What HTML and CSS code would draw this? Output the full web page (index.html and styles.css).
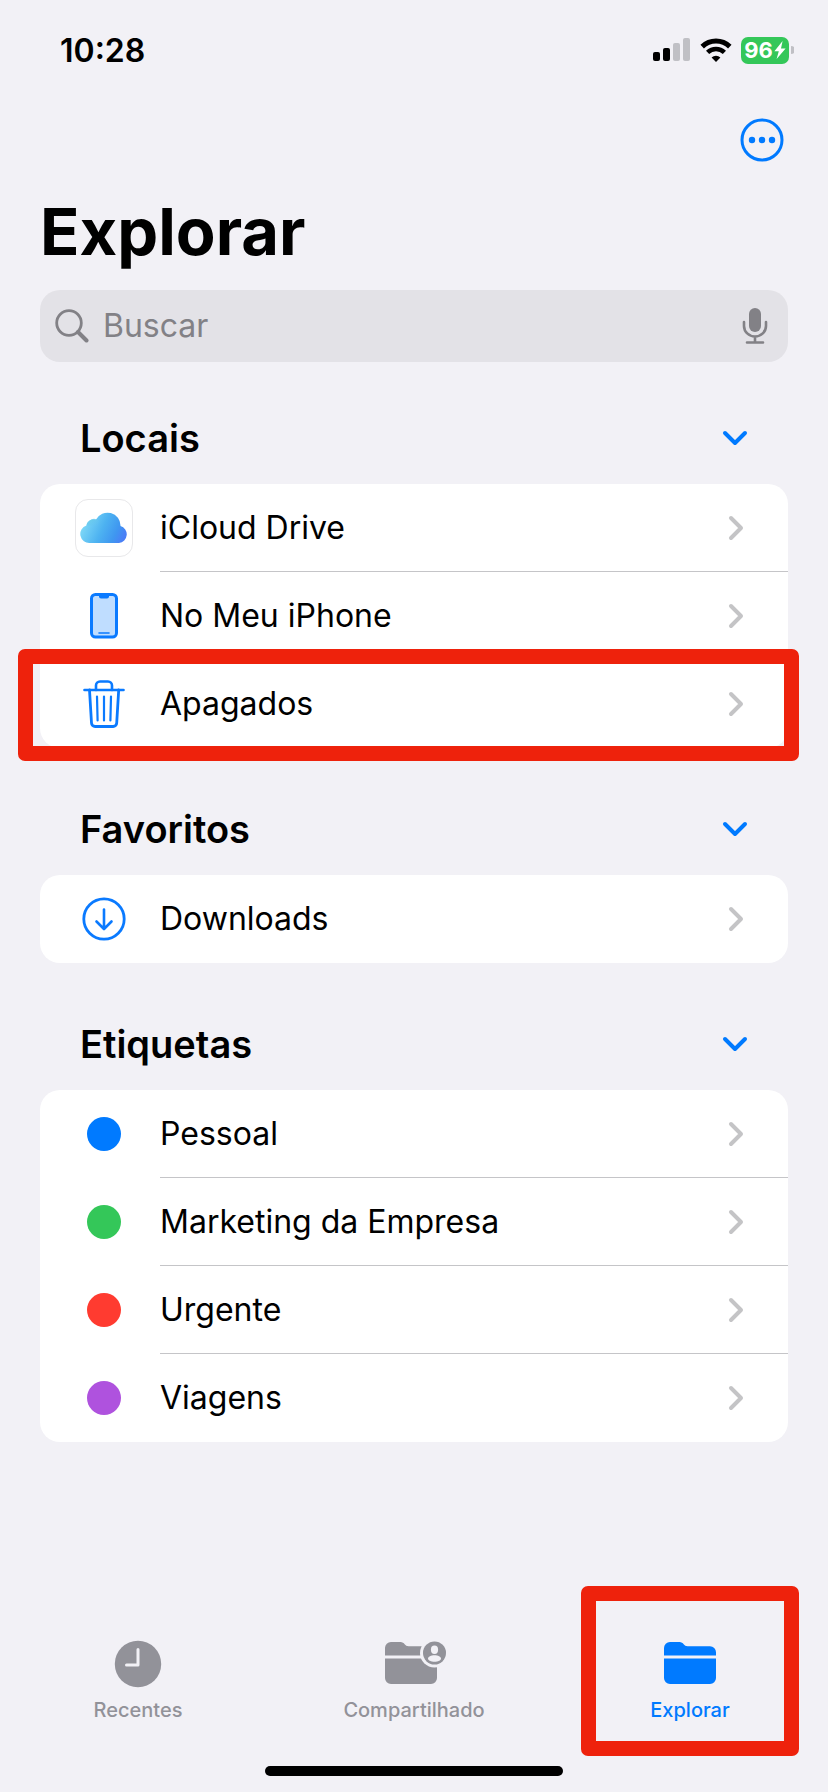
FILE: index.html
```html
<!DOCTYPE html>
<html lang="pt-BR">
<head>
<meta charset="utf-8">
<meta name="viewport" content="width=device-width, initial-scale=1">
<title>Explorar</title>
<link rel="stylesheet" href="styles.css">
</head>
<body>
<svg class="sprite" aria-hidden="true">
  <symbol id="down" viewBox="0 0 26 16"><path d="M3 3l10 10L23 3" fill="none" stroke="currentColor" stroke-width="4" stroke-linecap="round" stroke-linejoin="round"/></symbol>
  <symbol id="next" viewBox="0 0 16 26"><path d="M3 3l10 10L3 23" fill="none" stroke="currentColor" stroke-width="4" stroke-linecap="round" stroke-linejoin="round"/></symbol>
</svg>
<div class="screen">
  <header class="status">
    <time class="clock">10:28</time>
    <div class="indicators">
      <svg width="38" height="24" viewBox="0 0 38 24" aria-label="Sinal">
        <rect x="0" y="14" width="7" height="9" rx="2"/>
        <rect x="10" y="10" width="7" height="13" rx="2"/>
        <rect class="dim" x="20" y="5" width="7" height="18" rx="2"/>
        <rect class="dim" x="30" y="0" width="7" height="23" rx="2"/>
      </svg>
      <svg width="32" height="24" viewBox="0 0 32 24" aria-label="Wi-Fi">
        <path d="M2.2 8.6a20 20 0 0 1 27.6 0" fill="none" stroke="#000" stroke-width="5"/>
        <path d="M7.6 14.4a12.2 12.2 0 0 1 16.8 0" fill="none" stroke="#000" stroke-width="4.6"/>
        <path d="M16 24l-4.4-4.4a6.4 6.4 0 0 1 8.8 0z"/>
      </svg>
      <div class="battery">
        <span class="charge">96<svg width="12" height="18" viewBox="0 0 12 18" aria-hidden="true"><path d="M8.6 0L.4 10.2h4.4L2.6 18l9-10.6H7z" fill="#fff"/></svg></span>
        <svg width="3" height="8" viewBox="0 0 3 8" aria-hidden="true"><path class="dim" d="M0 0a4 4 0 0 1 0 8z"/></svg>
      </div>
    </div>
  </header>

  <main class="content">
    <div class="toolbar">
      <button class="more" type="button" aria-label="Mais">
        <svg width="44" height="44" viewBox="0 0 44 44"><circle cx="22" cy="22" r="20" fill="none" stroke="currentColor" stroke-width="3"/><g fill="currentColor"><circle cx="12" cy="22" r="3.2"/><circle cx="22" cy="22" r="3.2"/><circle cx="32" cy="22" r="3.2"/></g></svg>
      </button>
    </div>
    <h1 class="title">Explorar</h1>
    <label class="search">
      <svg width="34" height="34" viewBox="0 0 34 34" aria-hidden="true"><circle cx="14" cy="14" r="12.3" fill="none" stroke="currentColor" stroke-width="2.8"/><path d="M23 23l8.5 8.5" stroke="currentColor" stroke-width="4" stroke-linecap="round"/></svg>
      <input class="field" type="text" placeholder="Buscar" aria-label="Buscar">
      <svg width="26" height="38" viewBox="0 0 26 38" aria-hidden="true"><rect x="7" y="1" width="12" height="24" rx="6" fill="currentColor"/><path d="M2 15v4a11 10.5 0 0 0 22 0v-4M13 29.500v6M5 35.500h16" fill="none" stroke="currentColor" stroke-width="2.600" stroke-linecap="round"/></svg>
    </label>

    <section class="group">
      <div class="heading"><h2>Locais</h2><button class="fold" type="button" aria-label="Recolher Locais"><svg width="26" height="16"><use href="#down"/></svg></button></div>
      <ul class="card">
        <li><a class="row" href="#icloud">
          <span class="icon"><span class="tile"><svg width="48" height="32" viewBox="0 0 48 32">
            <defs>
              <linearGradient id="sky" x1="0" y1=".3" x2="1" y2=".6"><stop offset="0" stop-color="#86dff8"/><stop offset=".5" stop-color="#4db2f1"/><stop offset=".8" stop-color="#3f97f0"/><stop offset="1" stop-color="#4a7ff6"/></linearGradient>
              <linearGradient id="puff" x1="0" y1="0" x2="1" y2="1"><stop offset="0" stop-color="#6ccfe9"/><stop offset="1" stop-color="#63c0f2" stop-opacity="0"/></linearGradient>
            </defs>
            <path d="M10 31a9 9 0 0 1-3.600-17.500A7.500 7.500 0 0 1 16 7.600 13 13 0 0 1 40.500 14 8.700 8.700 0 0 1 39 31z" fill="url(#sky)"/>
            <path d="M6.400 13.500A7.500 7.500 0 0 1 19 9l-1 5z" fill="url(#puff)"/>
          </svg></span></span>
          <span class="name">iCloud Drive</span><svg class="next" width="16" height="26"><use href="#next"/></svg></a></li>
        <li><a class="row" href="#iphone">
          <span class="icon"><svg width="28" height="46" viewBox="0 0 28 46"><rect x="1.500" y="1.500" width="25" height="42.500" rx="4" fill="#bfddff" stroke="#0a7aff" stroke-width="3"/><path d="M9 2h10v1.500a2 2 0 0 1-2 2h-6a2 2 0 0 1-2-2z" fill="#0a7aff"/><path d="M9 40h10" stroke="#0a7aff" stroke-width="1.600" stroke-linecap="round"/></svg></span>
          <span class="name">No Meu iPhone</span><svg class="next" width="16" height="26"><use href="#next"/></svg></a></li>
        <li><a class="row marked" href="#apagados">
          <span class="icon"><svg width="42" height="48" viewBox="0 0 42 48" fill="none" stroke="#0a7aff" stroke-linecap="round" stroke-linejoin="round"><path d="M1.500 10h39" stroke-width="2.600"/><path d="M13 10V5.500a4 4 0 0 1 4-4h8a4 4 0 0 1 4 4V10" stroke-width="2.600"/><path d="M6.500 10l2 33a3.600 3.600 0 0 0 3.600 3.500h18a3.600 3.600 0 0 0 3.600-3.500l2-33" stroke-width="2.800"/><path d="M14 16.500l.6 24M21 16.500v24M28 16.500l-.6 24" stroke-width="2.200"/></svg></span>
          <span class="name">Apagados</span><svg class="next" width="16" height="26"><use href="#next"/></svg></a></li>
      </ul>
    </section>

    <section class="group">
      <div class="heading"><h2>Favoritos</h2><button class="fold" type="button" aria-label="Recolher Favoritos"><svg width="26" height="16"><use href="#down"/></svg></button></div>
      <ul class="card">
        <li><a class="row" href="#downloads">
          <span class="icon"><svg width="44" height="44" viewBox="0 0 44 44" fill="none" stroke="#0a7aff" stroke-linecap="round" stroke-linejoin="round"><circle cx="22" cy="22" r="20.200" stroke-width="2.800"/><path d="M22 12.500v19M14.500 24.500l7.500 7.500 7.500-7.500" stroke-width="2.600"/></svg></span>
          <span class="name">Downloads</span><svg class="next" width="16" height="26"><use href="#next"/></svg></a></li>
      </ul>
    </section>

    <section class="group">
      <div class="heading"><h2>Etiquetas</h2><button class="fold" type="button" aria-label="Recolher Etiquetas"><svg width="26" height="16"><use href="#down"/></svg></button></div>
      <ul class="card">
        <li><a class="row" href="#pessoal"><span class="icon"><span class="dot blue"></span></span><span class="name">Pessoal</span><svg class="next" width="16" height="26"><use href="#next"/></svg></a></li>
        <li><a class="row" href="#marketing"><span class="icon"><span class="dot green"></span></span><span class="name">Marketing da Empresa</span><svg class="next" width="16" height="26"><use href="#next"/></svg></a></li>
        <li><a class="row" href="#urgente"><span class="icon"><span class="dot red"></span></span><span class="name">Urgente</span><svg class="next" width="16" height="26"><use href="#next"/></svg></a></li>
        <li><a class="row" href="#viagens"><span class="icon"><span class="dot purple"></span></span><span class="name">Viagens</span><svg class="next" width="16" height="26"><use href="#next"/></svg></a></li>
      </ul>
    </section>
  </main>

  <nav class="tabs">
    <a class="tab" href="#recentes">
      <svg width="48" height="48" viewBox="0 0 48 48"><circle cx="24" cy="24" r="23.200" fill="currentColor"/><path d="M24 9.500v15.500H12.500" fill="none" stroke="#f2f1f6" stroke-width="3" stroke-linecap="round" stroke-linejoin="round"/></svg>
      <span>Recentes</span></a>
    <a class="tab" href="#compartilhado">
      <svg width="66" height="48" viewBox="-4 0 66 48"><path d="M0 15.500V8a6 6 0 0 1 6-6h9.500c4 0 4.500 4.300 8 4.300H46a6 6 0 0 1 6 6v3.200zM0 18.500h52V38a6 6 0 0 1-6 6H6a6 6 0 0 1-6-6z" fill="currentColor"/><circle cx="49.500" cy="13" r="14.500" fill="#f2f1f6"/><circle cx="49.500" cy="13" r="11.500" fill="currentColor"/><ellipse cx="49.500" cy="9.800" rx="3.600" ry="4.200" fill="#f2f1f6"/><path d="M43 18.600c0-2 3-3.400 6.500-3.400s6.500 1.400 6.500 3.400-3 3.200-6.500 3.200-6.500-1.200-6.500-3.200z" fill="#f2f1f6"/></svg>
      <span>Compartilhado</span></a>
    <a class="tab active" href="#explorar" aria-current="page">
      <svg width="52" height="48" viewBox="0 0 52 48"><path d="M0 15.500V8a6 6 0 0 1 6-6h9.500c4 0 4.500 4.300 8 4.300H46a6 6 0 0 1 6 6v3.200zM0 18.500h52V38a6 6 0 0 1-6 6H6a6 6 0 0 1-6-6z" fill="currentColor"/></svg>
      <span>Explorar</span></a>
  </nav>
  <div class="home"></div>
</div>
</body>
</html>
```

FILE: styles.css
```css
* { box-sizing: border-box; }
body {
  margin: 0;
  background: #f2f1f6;
  color: #000;
  font-family: Inter, "Liberation Sans", sans-serif;
}
h1, h2, ul { margin: 0; padding: 0; }
ul { list-style: none; }
a { color: inherit; text-decoration: none; }
button { padding: 0; border: 0; background: none; color: #007aff; }
svg { display: block; flex: none; }
.sprite { position: absolute; width: 0; height: 0; }
.screen { display: flex; flex-direction: column; min-height: 100vh; }

.status {
  display: flex;
  align-items: center;
  justify-content: space-between;
  height: 100px;
  padding: 0 34px 0 60px;
}
.clock { font-size: 32px; font-weight: 600; }
.indicators { display: flex; align-items: center; gap: 9px; }
.dim { fill: #c0c0c5; }
.battery { display: flex; align-items: center; gap: 2px; }
.charge {
  display: flex;
  align-items: center;
  justify-content: center;
  gap: 1px;
  width: 48px;
  height: 27px;
  border-radius: 7px;
  background: #34c759;
  color: #fff;
  font-size: 22px;
  font-weight: 700;
}

.content { flex: 1; padding: 18px 40px 0; }
.toolbar { display: flex; justify-content: flex-end; padding-right: 4px; }
.title { margin: 30px 0 18px; font-size: 65px; line-height: 80px; font-weight: 700; }
.search {
  display: flex;
  align-items: center;
  height: 72px;
  padding: 0 20px 0 15px;
  border-radius: 20px;
  background: #e3e2e7;
  color: #828186;
}
.field {
  flex: 1;
  min-width: 0;
  padding: 0 14px;
  border: 0;
  outline: 0;
  background: none;
  color: #000;
  font: 32px/40px Inter, "Liberation Sans", sans-serif;
}
.field::placeholder { color: #828186; opacity: 1; }

.group { padding-top: 57px; }
.search + .group { padding-top: 52px; }
.heading {
  display: flex;
  align-items: center;
  justify-content: space-between;
  padding: 0 40px 22px;
}
h2 { font-size: 38px; line-height: 48px; font-weight: 600; }
.card { border-radius: 20px; background: #fff; }
.row { position: relative; display: flex; align-items: center; height: 88px; padding-right: 44px; }
li + li .name::before {
  content: "";
  position: absolute;
  top: -1px;
  right: 0;
  left: 120px;
  height: 1px;
  background: #c5c5c8;
}
.icon { display: flex; justify-content: center; flex: none; width: 48px; margin: 0 32px 0 40px; }
.name { flex: 1; font-size: 32px; line-height: 40px; }
.next { color: #c4c4c6; }
.tile {
  display: flex;
  align-items: center;
  justify-content: center;
  flex: none;
  width: 58px;
  height: 58px;
  border: 1px solid #e8e8ea;
  border-radius: 13px;
}
.dot { width: 34px; height: 34px; border-radius: 50%; }
.blue { background: #007aff; }
.green { background: #34c759; }
.red { background: #ff3b30; }
.purple { background: #af52de; }

/* Highlight frames drawn over the row and the tab */
.marked::after, .active::after {
  content: "";
  position: absolute;
  z-index: 1;
  border: 15px solid #ee220c;
  border-radius: 7px;
}
.marked::after { inset: -11px -11px -13px -22px; }
.active::after { inset: 0 29px; }

.tabs { display: flex; }
.tab {
  position: relative;
  display: flex;
  flex: 1;
  flex-direction: column;
  align-items: center;
  gap: 9px;
  height: 170px;
  padding-top: 54px;
  color: #929299;
  font-size: 20px;
  line-height: 26px;
  font-weight: 500;
}
.active { color: #007aff; }
.home { width: 36%; height: 10px; margin: 10px auto 16px; border-radius: 5px; background: #000; }
```
